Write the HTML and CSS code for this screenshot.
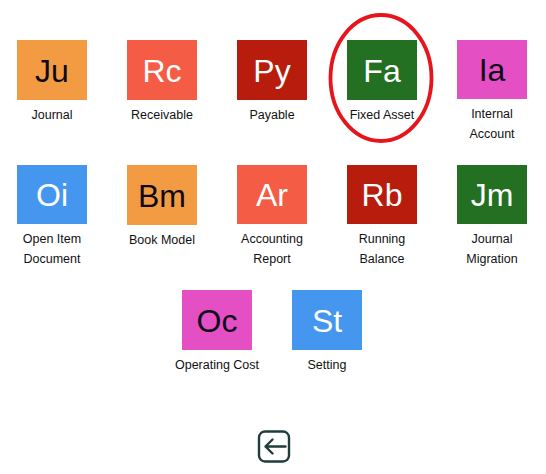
FILE: index.html
```html
<!DOCTYPE html>
<html>
<head>
<meta charset="utf-8">
<link rel="stylesheet" href="styles.css">
</head>
<body>
<div class="page">
  <div class="grid">
    <div class="item"><div class="tile orange dark">Ju</div><div class="label">Journal</div></div>
    <div class="item"><div class="tile coral">Rc</div><div class="label">Receivable</div></div>
    <div class="item"><div class="tile crimson">Py</div><div class="label">Payable</div></div>
    <div class="item"><div class="tile green">Fa</div><div class="label">Fixed Asset</div></div>
    <div class="item"><div class="tile pink dark">Ia</div><div class="label">Internal<br>Account</div></div>
    <div class="item"><div class="tile blue">Oi</div><div class="label">Open Item<br>Document</div></div>
    <div class="item"><div class="tile orange dark">Bm</div><div class="label">Book Model</div></div>
    <div class="item"><div class="tile coral">Ar</div><div class="label">Accounting<br>Report</div></div>
    <div class="item"><div class="tile crimson">Rb</div><div class="label">Running<br>Balance</div></div>
    <div class="item"><div class="tile green">Jm</div><div class="label">Journal<br>Migration</div></div>
    <div class="item"><div class="tile pink dark">Oc</div><div class="label">Operating Cost</div></div>
    <div class="item"><div class="tile blue">St</div><div class="label">Setting</div></div>
  </div>
  <div class="back">
    <svg width="34" height="34" viewBox="0 0 34 34">
      <rect x="2" y="1.5" width="30" height="30" rx="6" ry="6" fill="none" stroke="#1f3d3b" stroke-width="2.4"/>
      <path d="M8.5 16.5 H28.5 M15.5 9.5 L8.5 16.5 L15.5 23.5" fill="none" stroke="#1f3d3b" stroke-width="2.4" stroke-linecap="round" stroke-linejoin="round"/>
    </svg>
  </div>
  <svg class="circle" width="110" height="136" viewBox="0 0 110 136">
    <ellipse cx="53" cy="66" rx="50.5" ry="63" fill="none" stroke="#e8141c" stroke-width="3.8"/>
  </svg>
</div>
</body>
</html>
```
FILE: styles.css
```css
html, body {
  margin: 0;
  padding: 0;
  background: #ffffff;
}
.page {
  position: relative;
  width: 546px;
  height: 474px;
  overflow: hidden;
  font-family: "Liberation Sans", Arial, sans-serif;
}
.grid {
  width: 550px;
  margin-left: -3px;
  padding-top: 40px;
  display: flex;
  flex-wrap: wrap;
  justify-content: center;
  row-gap: 21px;
}
.item {
  width: 110px;
  height: 104px;
  display: flex;
  flex-direction: column;
  align-items: center;
}
.tile {
  width: 70px;
  height: 60px;
  display: flex;
  align-items: center;
  justify-content: center;
  font-size: 32px;
  color: #ffffff;
  line-height: 1;
  padding-top: 1px;
  box-sizing: border-box;
}
.tile.dark { color: #0e0a1a; }
.orange { background: #f39b42; }
.coral { background: #f45c45; }
.crimson { background: #b81c0c; }
.green { background: #247022; }
.pink { background: #e54fc4; }
.blue { background: #4496ee; }
.label {
  margin-top: 5px;
  font-size: 12.5px;
  line-height: 20px;
  color: #111111;
  text-align: center;
}
.back {
  display: flex;
  justify-content: center;
  margin-top: 36px;
  padding-left: 1px;
}
.circle {
  position: absolute;
  left: 328px;
  top: 12px;
}
```
